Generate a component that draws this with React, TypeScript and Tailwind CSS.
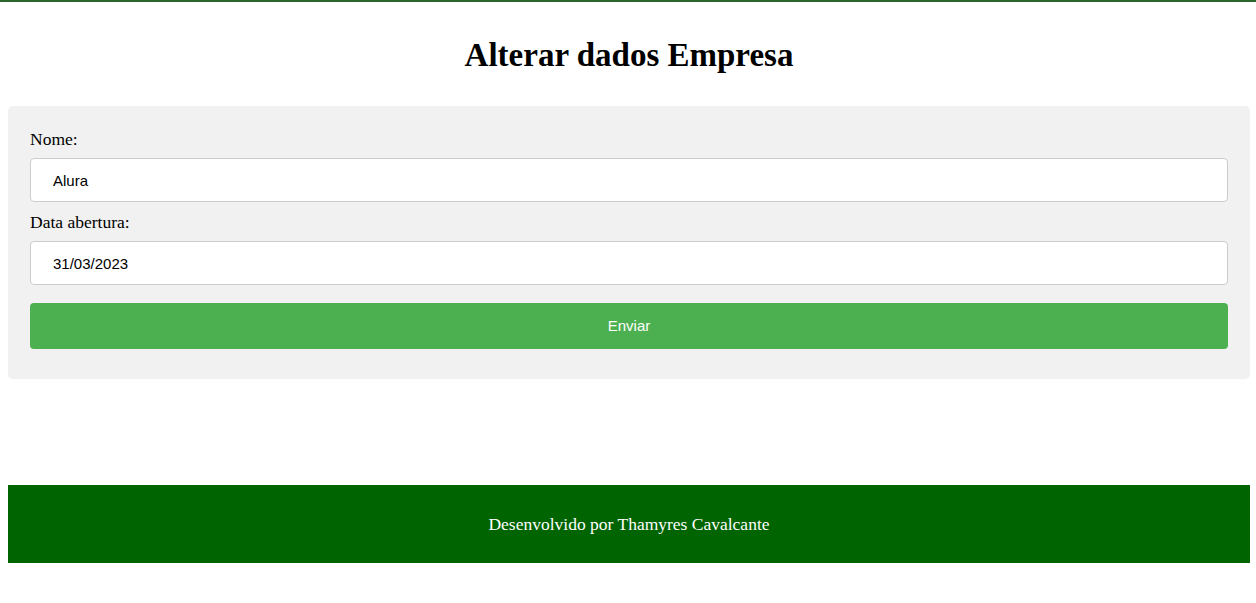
export default function App() {
  return (
    <div className="min-h-[603px] bg-white font-['Liberation_Serif',serif] text-black">
      <div className="h-[2px] w-full bg-[#2b662b]" />
      <main className="pl-2 pr-[6px]">
        <h1 className="mt-[35px] mb-[33px] text-center text-[33px] leading-[36px] font-bold">
          Alterar dados Empresa
        </h1>
        <form
          className="flex flex-col rounded-[5px] bg-[#f1f1f1] px-[22px] pt-[24px] pb-[30px]"
          onSubmit={(e) => e.preventDefault()}>
          <label htmlFor="nome" className="mb-[10px] text-[17.5px] leading-[18px]">
            Nome:
          </label>
          <input
            id="nome"
            defaultValue="Alura"
            className="h-[44px] rounded-[4px] border border-[#cccccc] bg-white px-[22px] font-['Liberation_Sans',Arial,sans-serif] text-[15px] text-black outline-none"
          />
          <label htmlFor="abertura" className="mt-[11px] mb-[10px] text-[17.5px] leading-[18px]">
            Data abertura:
          </label>
          <input
            id="abertura"
            defaultValue="31/03/2023"
            className="h-[44px] rounded-[4px] border border-[#cccccc] bg-white px-[22px] font-['Liberation_Sans',Arial,sans-serif] text-[15px] text-black outline-none"
          />
          <button
            type="submit"
            className="mt-[18px] h-[46px] rounded-[4px] bg-[#4caf50] font-['Liberation_Sans',Arial,sans-serif] text-[15px] text-white">
            Enviar
          </button>
        </form>
        <footer className="mt-[106px] flex h-[78px] items-center justify-center bg-[#006400] text-[17.5px] text-white">
          Desenvolvido por Thamyres Cavalcante
        </footer>
      </main>
    </div>
  );
}
